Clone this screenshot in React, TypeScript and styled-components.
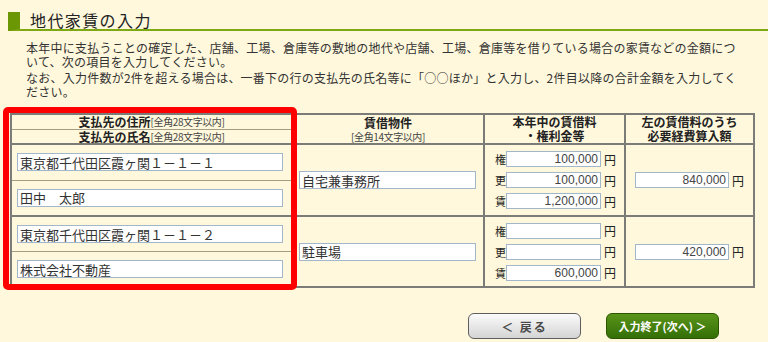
import styled, { createGlobalStyle } from "styled-components";

const GlobalStyle = createGlobalStyle`
  body {
    margin: 0;
    background: #fff8dc;
    font-family: "Noto Sans CJK JP", "Noto Sans", sans-serif;
    color: #333;
  }
`;

const Page = styled.div`
  width: 768px;
  height: 342px;
  padding-top: 12px;
  box-sizing: border-box;
  overflow: hidden;
`;

const Heading = styled.h2`
  margin: 0 0 0 8px;
  height: 17px;
  padding-left: 10px;
  border-left: 12px solid #6b9705;
  border-bottom: 2px solid #7fa812;
  font-size: 16px;
  font-weight: normal;
  line-height: 17px;
  letter-spacing: 1.4px;
  color: #222;
`;

const Intro = styled.div`
  margin-top: 10px;
  padding-left: 26px;
`;

const Para = styled.p`
  margin: 0 0 2px;
  font-size: 12px;
  line-height: 14px;
  letter-spacing: 0.24px;
  color: #333;
`;

const TableWrap = styled.div`
  position: relative;
  width: fit-content;
  margin: 14px 0 0 10px;
`;

const Highlight = styled.div`
  position: absolute;
  left: -7px;
  top: -6px;
  width: 294px;
  height: 183px;
  border: 6px solid #ff0000;
  border-radius: 5px;
  box-sizing: border-box;
  pointer-events: none;
`;

const Grid = styled.div`
  display: grid;
  grid-template-columns: 279px 190px 139px 127px;
  grid-template-rows: 28px 70px 69px;
  gap: 2px;
  padding: 2px;
  background: #7b7b78;
`;

const Cell = styled.div`
  background: #fff8dc;
  display: flex;
  align-items: center;
  min-width: 0;
`;

const HeadCell = styled(Cell)`
  flex-direction: column;
  justify-content: center;
  font-size: 12px;
  line-height: 14px;
  font-weight: bold;
  color: #222;
  text-align: center;
`;

const Note = styled.span`
  font-size: 10px;
  font-weight: normal;
  letter-spacing: -0.4px;
  line-height: 13px;
  color: #444;
`;

const SplitCell = styled(Cell)`
  flex-direction: column;
  align-items: stretch;
`;

const SubRow = styled.div<{ $head?: boolean; $divided?: boolean }>`
  flex: 1;
  display: flex;
  align-items: center;
  justify-content: ${(p) => (p.$head ? "center" : "flex-start")};
  padding-left: ${(p) => (p.$head ? "0" : "5px")};
  border-top: ${(p) => (p.$divided ? "1px solid #a59c84" : "none")};
  font-size: 12px;
  line-height: 13px;
  font-weight: ${(p) => (p.$head ? "bold" : "normal")};
  color: #222;
`;

const TextInput = styled.input<{ $width: number }>`
  width: ${(p) => p.$width}px;
  height: 18px;
  box-sizing: border-box;
  padding: 0 2px;
  border: 1px solid #a3b6ca;
  background: #fff;
  font-family: "Noto Sans CJK JP", sans-serif;
  font-size: 13px;
  color: #333;
  outline: none;
`;

const AmountInput = styled.input<{ $width: number }>`
  width: ${(p) => p.$width}px;
  height: 16px;
  box-sizing: border-box;
  padding: 0 2px;
  border: 1px solid #a3b6ca;
  background: #fff;
  font-family: "Liberation Sans", Arial, sans-serif;
  font-size: 12px;
  text-align: right;
  color: #444;
  outline: none;
`;

const PlaceCell = styled(Cell)`
  padding-left: 6px;
`;

const AmountStack = styled(Cell)`
  flex-direction: column;
  align-items: flex-start;
  justify-content: center;
  gap: 4px;
  padding-left: 10px;
`;

const AmountRow = styled.div`
  display: flex;
  align-items: center;
`;

const Kind = styled.span`
  width: 11px;
  font-size: 11px;
  line-height: 16px;
  color: #222;
`;

const Yen = styled.span`
  margin-left: 3px;
  font-size: 12px;
  color: #222;
`;

const ExpenseCell = styled(Cell)`
  padding-left: 9px;
`;

const ButtonRow = styled.div`
  display: flex;
  justify-content: flex-end;
  gap: 25px;
  padding-right: 49px;
  margin-top: 25px;
`;

const Button = styled.button`
  width: 113px;
  height: 26px;
  border-radius: 6px;
  font-family: "Noto Sans CJK JP", sans-serif;
  font-weight: bold;
  cursor: pointer;
  padding: 0;
`;

const BackButton = styled(Button)`
  border: 1px solid #5e5e5e;
  background: linear-gradient(#fbfbfb, #d4d4d4);
  color: #4a4a4a;
  font-size: 12px;
  letter-spacing: 2px;
`;

const NextButton = styled(Button)`
  border: 1px solid #2b5600;
  background: linear-gradient(#5a9419, #346f08);
  color: #fff;
  font-size: 11px;
`;

type Amounts = { ken: string; kou: string; chin: string };

const entries: {
  address: string;
  name: string;
  place: string;
  amounts: Amounts;
  expense: string;
}[] = [
  {
    address: "東京都千代田区霞ヶ関１－１－１",
    name: "田中　太郎",
    place: "自宅兼事務所",
    amounts: { ken: "100,000", kou: "100,000", chin: "1,200,000" },
    expense: "840,000",
  },
  {
    address: "東京都千代田区霞ヶ関１－１－２",
    name: "株式会社不動産",
    place: "駐車場",
    amounts: { ken: "", kou: "", chin: "600,000" },
    expense: "420,000",
  },
];

const kinds: { key: keyof Amounts; label: string }[] = [
  { key: "ken", label: "権" },
  { key: "kou", label: "更" },
  { key: "chin", label: "賃" },
];

const App: React.FC = () => {
  return (
    <Page>
      <GlobalStyle />
      <Heading>地代家賃の入力</Heading>
      <Intro>
        <Para>
          本年中に支払うことの確定した、店舗、工場、倉庫等の敷地の地代や店舗、工場、倉庫等を借りている場合の家賃などの金額につ
          <br />
          いて、次の項目を入力してください。
        </Para>
        <Para>
          なお、入力件数が2件を超える場合は、一番下の行の支払先の氏名等に「○○ほか」と入力し、2件目以降の合計金額を入力してく
          <br />
          ださい。
        </Para>
      </Intro>

      <TableWrap>
        <Grid>
          <SplitCell>
            <SubRow $head>
              支払先の住所<Note>[全角28文字以内]</Note>
            </SubRow>
            <SubRow $head $divided>
              支払先の氏名<Note>[全角28文字以内]</Note>
            </SubRow>
          </SplitCell>
          <HeadCell>
            賃借物件
            <Note>[全角14文字以内]</Note>
          </HeadCell>
          <HeadCell>
            本年中の賃借料
            <br />
            ・権利金等
          </HeadCell>
          <HeadCell>
            左の賃借料のうち
            <br />
            必要経費算入額
          </HeadCell>

          {entries.map((entry, index) => (
            <>
              <SplitCell key={`who-${index}`}>
                <SubRow>
                  <TextInput $width={266} value={entry.address} readOnly />
                </SubRow>
                <SubRow $divided>
                  <TextInput $width={266} value={entry.name} readOnly />
                </SubRow>
              </SplitCell>
              <PlaceCell key={`place-${index}`}>
                <TextInput $width={177} value={entry.place} readOnly />
              </PlaceCell>
              <AmountStack key={`amount-${index}`}>
                {kinds.map((kind) => (
                  <AmountRow key={kind.key}>
                    <Kind>{kind.label}</Kind>
                    <AmountInput $width={95} value={entry.amounts[kind.key]} readOnly />
                    <Yen>円</Yen>
                  </AmountRow>
                ))}
              </AmountStack>
              <ExpenseCell key={`expense-${index}`}>
                <AmountInput $width={94} value={entry.expense} readOnly />
                <Yen>円</Yen>
              </ExpenseCell>
            </>
          ))}
        </Grid>
        <Highlight />
      </TableWrap>

      <ButtonRow>
        <BackButton>＜ 戻る</BackButton>
        <NextButton>入力終了(次へ) ＞</NextButton>
      </ButtonRow>
    </Page>
  );
};

export default App;
